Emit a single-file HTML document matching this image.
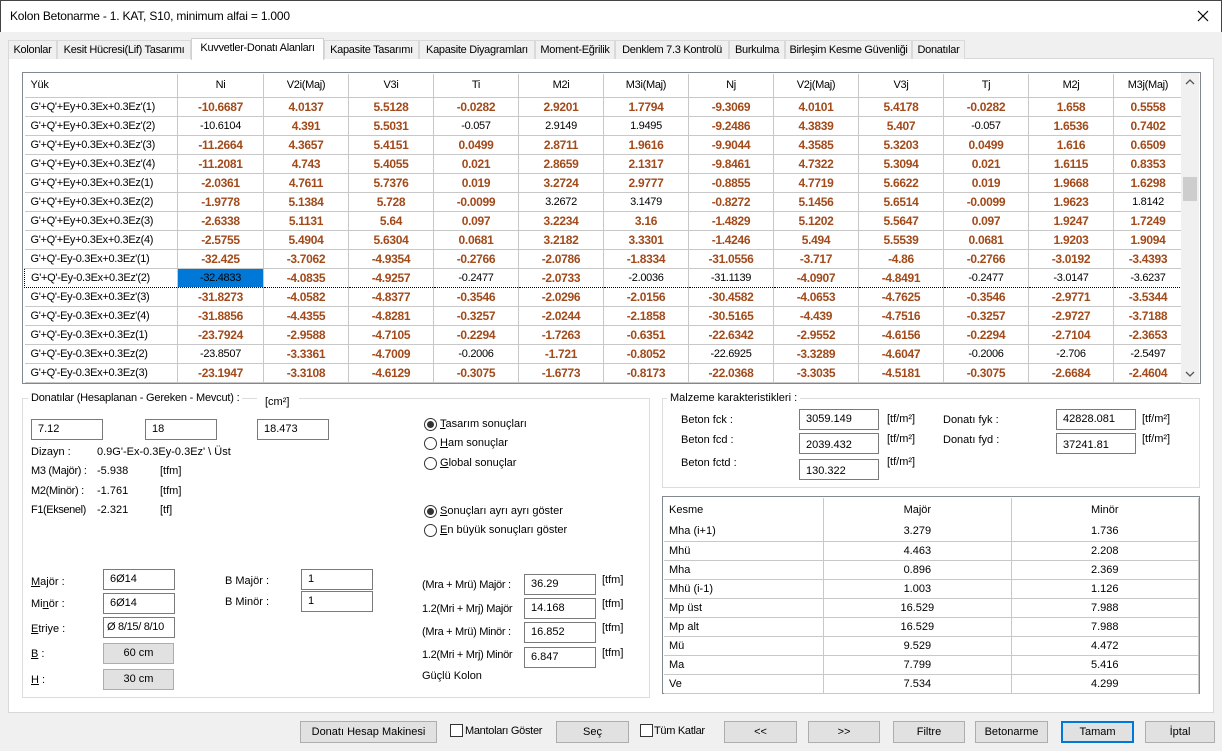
<!DOCTYPE html>
<html><head><meta charset="utf-8"><style>
*{box-sizing:border-box;margin:0;padding:0}
body{width:1222px;height:751px;background:#f0f0f0;font-family:"Liberation Sans",sans-serif;font-size:11px;color:#000;position:relative;overflow:hidden}
.a{position:absolute;white-space:nowrap}
#title{left:0;top:0;width:1222px;height:32px;background:#fff;border:1px solid #444;border-bottom:none}
#tabs{left:8px;top:40px;height:19px}
.tab{position:absolute;top:0;height:19px;border:1px solid #d9d9d9;border-bottom:none;background:#f0f0f0;font-size:11px;letter-spacing:-0.3px;padding:3px 0 0;text-align:center;white-space:nowrap;overflow:hidden}
.tab.s{background:#fff;top:-2px;height:22px;border-color:#d0d0d0}
#panel{left:8px;top:58px;width:1206px;height:655px;background:#fff;border:1px solid #d9d9d9}
#grid{left:22px;top:72px;width:1179px;height:312px;border:1px solid #828790;background:#fff;overflow:hidden}
table.g{border-collapse:collapse;position:absolute;left:1px;top:1px;table-layout:fixed}
table.g td{height:19px;border-right:1px solid #c8c8c8;border-bottom:1px solid #c8c8c8;text-align:center;font-weight:bold;color:#a24a1a;font-size:12px;letter-spacing:-0.3px;padding:0;overflow:hidden;white-space:nowrap}
table.g td.p{font-weight:normal;color:#000;font-size:11px;letter-spacing:-0.3px}
table.g td:first-child{text-align:left;padding-left:6px;font-weight:normal;color:#000;font-size:11px;letter-spacing:-0.3px}
table.g tr.h td{height:23px;font-weight:normal;color:#000;font-size:11px}
table.g tr.sel td{border-top:1px dotted #000;border-bottom:1px dotted #000}
table.g td.sb{background:#0078d7;color:#000}
#sbar{left:1181px;top:73px;width:18px;height:310px;background:#f0f0f0}
.in{position:absolute;height:21px;border:1px solid #7a7a7a;background:#fff;padding:3px 0 0 6px;font-size:11px;white-space:nowrap;overflow:hidden}
.gb{position:absolute;border:1px solid #dcdcdc}
.rad{position:absolute;width:13px;height:13px;border:1px solid #333;border-radius:50%;background:#fff}
.rad.on::after{content:"";position:absolute;left:2px;top:2px;width:7px;height:7px;border-radius:50%;background:#333}
.btn{position:absolute;top:721px;height:22px;border:1px solid #adadad;background:#e1e1e1;text-align:center;padding-top:4px;font-size:11px;white-space:nowrap}
.cb{position:absolute;top:724px;width:13px;height:13px;border:1px solid #333;background:#fff}
.gr{position:absolute;height:21px;border:1px solid #adadad;background:#e1e1e1;text-align:center;padding-top:3px}
table.k{border-collapse:collapse;position:absolute;left:1px;top:1px;table-layout:fixed}
table.k td{height:19px;border-right:1px solid #c8c8c8;border-bottom:1px solid #c8c8c8;text-align:center;font-size:11px;padding:0}
table.k td:first-child{text-align:left;padding-left:5px}
table.k tr.h td{height:24px;border-bottom:none}
u{text-decoration:underline}
</style></head><body>
<div class="a" id="title"><span class="a" style="left:9px;top:8px;font-size:12px;letter-spacing:-0.2px">Kolon Betonarme - 1. KAT, S10, minimum alfai = 1.000</span>
<svg class="a" style="left:1196px;top:9px" width="12" height="12"><path d="M1 1L11 11M11 1L1 11" stroke="#000" stroke-width="1.2"/></svg></div>
<div class="a" id="panel"></div>
<div class="a" id="tabs">
<div class="tab" style="left:0;width:49px">Kolonlar</div>
<div class="tab" style="left:49px;width:134px">Kesit Hücresi(Lif) Tasarımı</div>
<div class="tab s" style="left:183px;width:133px">Kuvvetler-Donatı Alanları</div>
<div class="tab" style="left:316px;width:95px">Kapasite Tasarımı</div>
<div class="tab" style="left:411px;width:116px">Kapasite Diyagramları</div>
<div class="tab" style="left:527px;width:80px">Moment-Eğrilik</div>
<div class="tab" style="left:607px;width:114px">Denklem 7.3 Kontrolü</div>
<div class="tab" style="left:721px;width:56px">Burkulma</div>
<div class="tab" style="left:777px;width:127px">Birleşim Kesme Güvenliği</div>
<div class="tab" style="left:904px;width:53px">Donatılar</div>
</div>
<div class="a" id="grid">
<table class="g">
<colgroup><col style="width:153px"><col style="width:86px"><col style="width:85px"><col style="width:85px"><col style="width:85px"><col style="width:85px"><col style="width:85px"><col style="width:85px"><col style="width:85px"><col style="width:85px"><col style="width:85px"><col style="width:85px"><col style="width:69px"></colgroup>
<tr class="h"><td>Yük</td><td>Ni</td><td>V2i(Maj)</td><td>V3i</td><td>Ti</td><td>M2i</td><td>M3i(Maj)</td><td>Nj</td><td>V2j(Maj)</td><td>V3j</td><td>Tj</td><td>M2j</td><td>M3j(Maj)</td></tr>
<tr><td>G'+Q'+Ey+0.3Ex+0.3Ez'(1)</td><td>-10.6687</td><td>4.0137</td><td>5.5128</td><td>-0.0282</td><td>2.9201</td><td>1.7794</td><td>-9.3069</td><td>4.0101</td><td>5.4178</td><td>-0.0282</td><td>1.658</td><td>0.5558</td></tr>
<tr><td>G'+Q'+Ey+0.3Ex+0.3Ez'(2)</td><td class="p">-10.6104</td><td>4.391</td><td>5.5031</td><td class="p">-0.057</td><td class="p">2.9149</td><td class="p">1.9495</td><td>-9.2486</td><td>4.3839</td><td>5.407</td><td class="p">-0.057</td><td>1.6536</td><td>0.7402</td></tr>
<tr><td>G'+Q'+Ey+0.3Ex+0.3Ez'(3)</td><td>-11.2664</td><td>4.3657</td><td>5.4151</td><td>0.0499</td><td>2.8711</td><td>1.9616</td><td>-9.9044</td><td>4.3585</td><td>5.3203</td><td>0.0499</td><td>1.616</td><td>0.6509</td></tr>
<tr><td>G'+Q'+Ey+0.3Ex+0.3Ez'(4)</td><td>-11.2081</td><td>4.743</td><td>5.4055</td><td>0.021</td><td>2.8659</td><td>2.1317</td><td>-9.8461</td><td>4.7322</td><td>5.3094</td><td>0.021</td><td>1.6115</td><td>0.8353</td></tr>
<tr><td>G'+Q'+Ey+0.3Ex+0.3Ez(1)</td><td>-2.0361</td><td>4.7611</td><td>5.7376</td><td>0.019</td><td>3.2724</td><td>2.9777</td><td>-0.8855</td><td>4.7719</td><td>5.6622</td><td>0.019</td><td>1.9668</td><td>1.6298</td></tr>
<tr><td>G'+Q'+Ey+0.3Ex+0.3Ez(2)</td><td>-1.9778</td><td>5.1384</td><td>5.728</td><td>-0.0099</td><td class="p">3.2672</td><td class="p">3.1479</td><td>-0.8272</td><td>5.1456</td><td>5.6514</td><td>-0.0099</td><td>1.9623</td><td class="p">1.8142</td></tr>
<tr><td>G'+Q'+Ey+0.3Ex+0.3Ez(3)</td><td>-2.6338</td><td>5.1131</td><td>5.64</td><td>0.097</td><td>3.2234</td><td>3.16</td><td>-1.4829</td><td>5.1202</td><td>5.5647</td><td>0.097</td><td>1.9247</td><td>1.7249</td></tr>
<tr><td>G'+Q'+Ey+0.3Ex+0.3Ez(4)</td><td>-2.5755</td><td>5.4904</td><td>5.6304</td><td>0.0681</td><td>3.2182</td><td>3.3301</td><td>-1.4246</td><td>5.494</td><td>5.5539</td><td>0.0681</td><td>1.9203</td><td>1.9094</td></tr>
<tr><td>G'+Q'-Ey-0.3Ex+0.3Ez'(1)</td><td>-32.425</td><td>-3.7062</td><td>-4.9354</td><td>-0.2766</td><td>-2.0786</td><td>-1.8334</td><td>-31.0556</td><td>-3.717</td><td>-4.86</td><td>-0.2766</td><td>-3.0192</td><td>-3.4393</td></tr>
<tr class="sel"><td style="border-left:1px dotted #000">G'+Q'-Ey-0.3Ex+0.3Ez'(2)</td><td class="p sb">-32.4833</td><td>-4.0835</td><td>-4.9257</td><td class="p">-0.2477</td><td>-2.0733</td><td class="p">-2.0036</td><td class="p">-31.1139</td><td>-4.0907</td><td>-4.8491</td><td class="p">-0.2477</td><td class="p">-3.0147</td><td class="p" style="border-right:1px dotted #000">-3.6237</td></tr>
<tr><td>G'+Q'-Ey-0.3Ex+0.3Ez'(3)</td><td>-31.8273</td><td>-4.0582</td><td>-4.8377</td><td>-0.3546</td><td>-2.0296</td><td>-2.0156</td><td>-30.4582</td><td>-4.0653</td><td>-4.7625</td><td>-0.3546</td><td>-2.9771</td><td>-3.5344</td></tr>
<tr><td>G'+Q'-Ey-0.3Ex+0.3Ez'(4)</td><td>-31.8856</td><td>-4.4355</td><td>-4.8281</td><td>-0.3257</td><td>-2.0244</td><td>-2.1858</td><td>-30.5165</td><td>-4.439</td><td>-4.7516</td><td>-0.3257</td><td>-2.9727</td><td>-3.7188</td></tr>
<tr><td>G'+Q'-Ey-0.3Ex+0.3Ez(1)</td><td>-23.7924</td><td>-2.9588</td><td>-4.7105</td><td>-0.2294</td><td>-1.7263</td><td>-0.6351</td><td>-22.6342</td><td>-2.9552</td><td>-4.6156</td><td>-0.2294</td><td>-2.7104</td><td>-2.3653</td></tr>
<tr><td>G'+Q'-Ey-0.3Ex+0.3Ez(2)</td><td class="p">-23.8507</td><td>-3.3361</td><td>-4.7009</td><td class="p">-0.2006</td><td>-1.721</td><td>-0.8052</td><td class="p">-22.6925</td><td>-3.3289</td><td>-4.6047</td><td class="p">-0.2006</td><td class="p">-2.706</td><td class="p">-2.5497</td></tr>
<tr><td>G'+Q'-Ey-0.3Ex+0.3Ez(3)</td><td>-23.1947</td><td>-3.3108</td><td>-4.6129</td><td>-0.3075</td><td>-1.6773</td><td>-0.8173</td><td>-22.0368</td><td>-3.3035</td><td>-4.5181</td><td>-0.3075</td><td>-2.6684</td><td>-2.4604</td></tr>
</table>
</div>
<div class="a" id="sbar">
<svg class="a" style="left:4px;top:6px" width="10" height="6"><path d="M1 5L5 1L9 5" stroke="#555" fill="none" stroke-width="1.3"/></svg>
<div class="a" style="left:2px;top:104px;width:14px;height:24px;background:#cdcdcd"></div>
<svg class="a" style="left:4px;top:298px" width="10" height="6"><path d="M1 1L5 5L9 1" stroke="#555" fill="none" stroke-width="1.3"/></svg>
</div>

<!-- left group -->
<div class="gb" style="left:22px;top:398px;width:628px;height:300px"></div>
<div class="a" style="left:28px;top:392px;background:#fff;padding:0 3px;letter-spacing:-0.2px">Donatılar (Hesaplanan - Gereken - Mevcut) :</div>
<div class="a" style="left:257px;top:393px;background:#fff;width:42px;height:10px"></div>
<div class="a" style="left:265px;top:396px">[cm²]</div>
<div class="in" style="left:31px;top:419px;width:72px">7.12</div>
<div class="in" style="left:145px;top:419px;width:72px">18</div>
<div class="in" style="left:257px;top:419px;width:72px">18.473</div>
<div class="a" style="left:31px;top:446px">Dizayn :</div><div class="a" style="left:97px;top:446px">0.9G'-Ex-0.3Ey-0.3Ez' \ Üst</div>
<div class="a" style="left:31px;top:465px;letter-spacing:-0.3px">M3 (Majör) :</div><div class="a" style="left:97px;top:465px">-5.938</div><div class="a" style="left:160px;top:465px">[tfm]</div>
<div class="a" style="left:31px;top:485px;letter-spacing:-0.3px">M2(Minör) :</div><div class="a" style="left:97px;top:485px">-1.761</div><div class="a" style="left:160px;top:485px">[tfm]</div>
<div class="a" style="left:31px;top:504px;letter-spacing:-0.4px">F1(Eksenel)</div><div class="a" style="left:97px;top:504px">-2.321</div><div class="a" style="left:160px;top:504px">[tf]</div>
<div class="rad on" style="left:424px;top:418px"></div><div class="a" style="left:440px;top:418px"><u>T</u>asarım sonuçları</div>
<div class="rad" style="left:424px;top:437px"></div><div class="a" style="left:440px;top:437px"><u>H</u>am sonuçlar</div>
<div class="rad" style="left:424px;top:457px"></div><div class="a" style="left:440px;top:457px"><u>G</u>lobal sonuçlar</div>
<div class="rad on" style="left:424px;top:505px"></div><div class="a" style="left:440px;top:505px"><u>S</u>onuçları ayrı ayrı göster</div>
<div class="rad" style="left:424px;top:524px"></div><div class="a" style="left:440px;top:524px"><u>E</u>n büyük sonuçları göster</div>
<div class="a" style="left:31px;top:576px"><u>M</u>ajör :</div><div class="in" style="left:103px;top:569px;width:72px">6Ø14</div>
<div class="a" style="left:31px;top:598px">Mi<u>n</u>ör :</div><div class="in" style="left:103px;top:593px;width:72px">6Ø14</div>
<div class="a" style="left:31px;top:623px"><u>E</u>triye :</div><div class="in" style="left:103px;top:617px;width:72px;padding-left:3px;letter-spacing:-0.3px">Ø 8/15/ 8/10</div>
<div class="a" style="left:31px;top:648px"><u>B</u> :</div><div class="gr" style="left:103px;top:643px;width:71px">60 cm</div>
<div class="a" style="left:31px;top:674px"><u>H</u> :</div><div class="gr" style="left:103px;top:669px;width:71px">30 cm</div>
<div class="a" style="left:225px;top:575px">B Majör :</div><div class="in" style="left:301px;top:569px;width:72px">1</div>
<div class="a" style="left:225px;top:596px">B Minör :</div><div class="in" style="left:301px;top:591px;width:72px">1</div>
<div class="a" style="left:422px;top:579px;letter-spacing:-0.3px">(Mra + Mrü) Majör :</div><div class="in" style="left:524px;top:574px;width:72px">36.29</div><div class="a" style="left:602px;top:574px">[tfm]</div>
<div class="a" style="left:422px;top:603px;letter-spacing:-0.3px">1.2(Mri + Mrj) Majör</div><div class="in" style="left:524px;top:598px;width:72px">14.168</div><div class="a" style="left:602px;top:598px">[tfm]</div>
<div class="a" style="left:422px;top:626px;letter-spacing:-0.3px">(Mra + Mrü) Minör :</div><div class="in" style="left:524px;top:622px;width:72px">16.852</div><div class="a" style="left:602px;top:622px">[tfm]</div>
<div class="a" style="left:422px;top:649px;letter-spacing:-0.3px">1.2(Mri + Mrj) Minör</div><div class="in" style="left:524px;top:647px;width:72px">6.847</div><div class="a" style="left:602px;top:647px">[tfm]</div>
<div class="a" style="left:422px;top:670px">Güçlü Kolon</div>

<!-- right group -->
<div class="gb" style="left:662px;top:398px;width:538px;height:90px"></div>
<div class="a" style="left:667px;top:392px;background:#fff;padding:0 3px">Malzeme karakteristikleri :</div>
<div class="a" style="left:681px;top:414px">Beton fck :</div><div class="in" style="left:799px;top:409px;width:80px">3059.149</div><div class="a" style="left:887px;top:413px">[tf/m²]</div>
<div class="a" style="left:681px;top:434px">Beton fcd :</div><div class="in" style="left:799px;top:433px;width:80px;padding-top:5px">2039.432</div><div class="a" style="left:887px;top:433px">[tf/m²]</div>
<div class="a" style="left:681px;top:457px">Beton fctd :</div><div class="in" style="left:799px;top:459px;width:80px;padding-top:5px">130.322</div><div class="a" style="left:887px;top:456px">[tf/m²]</div>
<div class="a" style="left:943px;top:414px">Donatı fyk :</div><div class="in" style="left:1056px;top:409px;width:80px">42828.081</div><div class="a" style="left:1142px;top:413px">[tf/m²]</div>
<div class="a" style="left:943px;top:434px">Donatı fyd :</div><div class="in" style="left:1056px;top:433px;width:80px;padding-top:5px">37241.81</div><div class="a" style="left:1142px;top:433px">[tf/m²]</div>

<div class="a" style="left:662px;top:496px;width:538px;height:198px;border:1px solid #828790;background:#fff">
<table class="k"><colgroup><col style="width:160px"><col style="width:188px"><col style="width:188px"></colgroup>
<tr class="h"><td>Kesme</td><td>Majör</td><td>Minör</td></tr>
<tr><td>Mha (i+1)</td><td>3.279</td><td>1.736</td></tr>
<tr><td>Mhü</td><td>4.463</td><td>2.208</td></tr>
<tr><td>Mha</td><td>0.896</td><td>2.369</td></tr>
<tr><td>Mhü (i-1)</td><td>1.003</td><td>1.126</td></tr>
<tr><td>Mp üst</td><td>16.529</td><td>7.988</td></tr>
<tr><td>Mp alt</td><td>16.529</td><td>7.988</td></tr>
<tr><td>Mü</td><td>9.529</td><td>4.472</td></tr>
<tr><td>Ma</td><td>7.799</td><td>5.416</td></tr>
<tr><td>Ve</td><td>7.534</td><td>4.299</td></tr>
</table></div>

<!-- buttons -->
<div class="btn" style="left:300px;width:137px">Donatı Hesap Makinesi</div>
<div class="cb" style="left:450px"></div><div class="a" style="left:465px;top:725px;letter-spacing:-0.3px">Mantoları Göster</div>
<div class="btn" style="left:556px;width:73px">Seç</div>
<div class="cb" style="left:640px"></div><div class="a" style="left:654px;top:725px;letter-spacing:-0.3px">Tüm Katlar</div>
<div class="btn" style="left:724px;width:73px">&lt;&lt;</div>
<div class="btn" style="left:808px;width:72px">&gt;&gt;</div>
<div class="btn" style="left:893px;width:72px">Filtre</div>
<div class="btn" style="left:975px;width:73px">Betonarme</div>
<div class="btn" style="left:1061px;width:73px;border:2px solid #0078d7;padding-top:3px">Tamam</div>
<div class="btn" style="left:1145px;width:70px">İptal</div>
</body></html>
